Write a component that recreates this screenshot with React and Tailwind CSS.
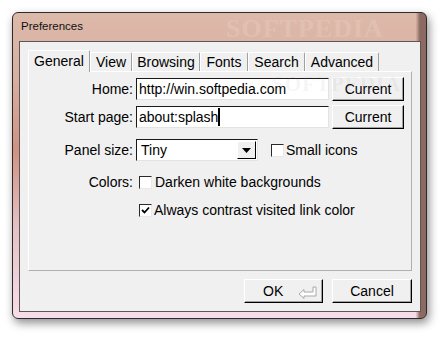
import React from 'react';

const tabs = [
  { label: 'General', w: 'w-[62px]', sel: true },
  { label: 'View', w: 'w-[42px]' },
  { label: 'Browsing', w: 'w-[68px]' },
  { label: 'Fonts', w: 'w-[48px]' },
  { label: 'Search', w: 'w-[57px]' },
  { label: 'Advanced', w: 'w-[74px]' },
];

function Sunken({ className = '', children }) {
  return (
    <div className={`border border-t-[#1a1a1a] border-l-[#1a1a1a] border-b-[#e3e3e3] border-r-[#e3e3e3] bg-white ${className}`}>
      {children}
    </div>
  );
}

function ClassicButton({ className = '', children }) {
  return (
    <button className={`border border-t-white border-l-white border-b-black border-r-black bg-[#f0f0f0] shadow-[inset_-1px_-1px_0_#a0a0a0] flex items-center justify-center ${className}`}>
      {children}
    </button>
  );
}

function Checkbox({ checked }) {
  return (
    <div className="w-[13px] h-[13px] bg-white border border-t-[#2a2a2a] border-l-[#2a2a2a] border-b-[#e8e8e8] border-r-[#e8e8e8] flex items-center justify-center">
      {checked && (
        <svg width="9" height="9" viewBox="0 0 9 9">
          <path d="M1 4 L3.5 6.5 L8 1.5" fill="none" stroke="#000" strokeWidth="1.8" />
        </svg>
      )}
    </div>
  );
}

export default function App() {
  return (
    <div className="w-[448px] h-[340px] bg-white overflow-hidden pl-[12px] pt-[12px] font-['Liberation_Sans',Arial,sans-serif] text-[14px] text-black leading-none">
      <div className="w-[415px] h-[307px] rounded-[6px] border border-[#2e2a2a] bg-[linear-gradient(90deg,rgba(0,0,0,0)_97.5%,#8c6a62_98.5%),linear-gradient(180deg,#ddb9aa_0%,#d8b0a2_20%,#d09282_45%,#e5c0c4_70%,#f6dde9_100%)] shadow-[2px_4px_10px_rgba(0,0,0,0.45)] flex flex-col">
        {/* title bar */}
        <div className="relative h-[28px] flex items-center pl-[8px]">
          <span className="text-[11.5px] text-[#111]">Preferences</span>
          <span className="absolute left-[213px] top-[3px] font-['Liberation_Serif',serif] font-bold text-[26px] tracking-[1px] text-white/15 pointer-events-none">SOFTPEDIA</span>
        </div>

        {/* client */}
        <div className="ml-[6px] w-[402px] h-[271px] border border-[#5c5656] bg-[#f0f0f0] px-[8px] pt-[8px]">
          {/* tab strip */}
          <div className="flex items-end h-[22px] -mb-px">
            {tabs.map((t) =>
              t.sel ? (
                <div key={t.label} className={`${t.w} h-[22px] relative z-10 bg-[#f0f0f0] border-l border-t border-r border-l-white border-t-white border-r-[#a0a0a0] rounded-t-[2px] flex items-center justify-center pb-[1px]`}>
                  {t.label}
                </div>
              ) : (
                <div key={t.label} className={`${t.w} h-[20px] bg-[#f0f0f0] border-l border-t border-r border-l-white border-t-white border-r-[#a0a0a0] rounded-t-[2px] flex items-center justify-center pb-[2px]`}>
                  {t.label}
                </div>
              )
            )}
          </div>

          {/* panel */}
          <div className="relative h-[200px] border border-t-white border-l-white border-r-[#b0b0b0] border-b-[#b0b0b0] pt-[5px]">
            <div className="flex items-center h-[24px]">
              <div className="w-[104px] text-right">Home:</div>
              <Sunken className="ml-[3px] w-[193px] h-[22px] flex items-center pl-[2px]">http://win.softpedia.com</Sunken>
              <ClassicButton className="ml-[3px] w-[72px] h-[24px]">Current</ClassicButton>
            </div>
            <div className="flex items-center h-[24px] mt-[4px]">
              <div className="w-[104px] text-right">Start page:</div>
              <Sunken className="ml-[3px] w-[193px] h-[22px] flex items-center pl-[2px]">
                about:splash<span className="inline-block w-[2px] h-[18px] bg-black" />
              </Sunken>
              <ClassicButton className="ml-[3px] w-[72px] h-[24px]">Current</ClassicButton>
            </div>
            <div className="flex items-center h-[24px] mt-[9px]">
              <div className="w-[104px] text-right">Panel size:</div>
              <Sunken className="ml-[3px] w-[122px] h-[22px] flex items-stretch">
                <div className="flex-1 flex items-center pl-[4px]">Tiny</div>
                <div className="w-[19px] my-[1px] mr-[1px] border border-t-white border-l-white border-b-black border-r-black bg-[#f0f0f0] flex items-center justify-center">
                  <svg width="9" height="5" viewBox="0 0 9 5">
                    <path d="M0 0 H9 L4.5 5 Z" fill="#000" />
                  </svg>
                </div>
              </Sunken>
              <div className="ml-[13px]"><Checkbox /></div>
              <span className="ml-[2px]">Small icons</span>
            </div>
            <div className="flex items-center h-[20px] mt-[10px]">
              <div className="w-[104px] text-right">Colors:</div>
              <div className="ml-[6px]"><Checkbox /></div>
              <span className="ml-[3px]">Darken white backgrounds</span>
            </div>
            <div className="flex items-center h-[20px] mt-[8px]">
              <div className="ml-[110px]"><Checkbox checked /></div>
              <span className="ml-[2px]">Always contrast visited link color</span>
            </div>
            <div className="absolute left-[243px] top-[2px] font-['Liberation_Serif',serif] font-bold text-[21px] tracking-[1px] text-[#9a9a9a]/10 pointer-events-none">SOFTPEDIA</div>
          </div>

          {/* footer buttons */}
          <div className="flex justify-end mt-[8px]">
            <ClassicButton className="w-[79px] h-[24px] relative">
              <span className="absolute left-[18px] top-[4px]">OK</span>
              <svg className="absolute left-[53px] top-[6px]" width="20" height="14" viewBox="0 0 20 14">
                <path d="M1 8 L6 3.5 V6 H15 V1 H18 V10 H6 V12.5 Z" fill="#fff" stroke="#a8a8a8" strokeWidth="1" />
              </svg>
            </ClassicButton>
            <ClassicButton className="ml-[9px] w-[80px] h-[24px]">Cancel</ClassicButton>
          </div>
        </div>
      </div>
    </div>
  );
}
